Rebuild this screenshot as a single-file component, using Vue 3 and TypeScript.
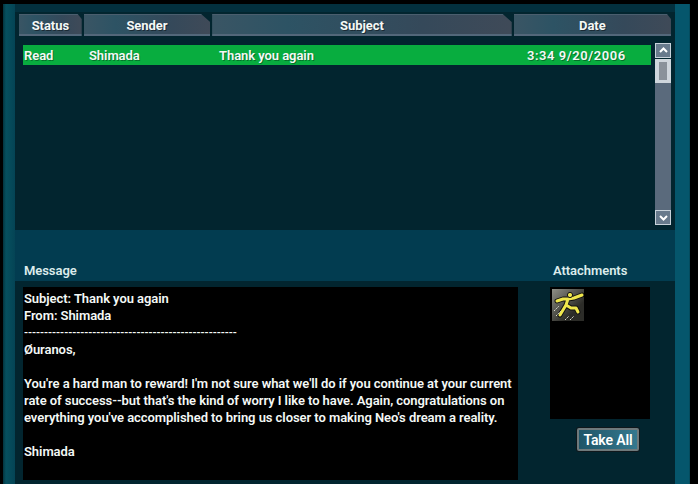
<script setup lang="ts">
const columns = [
  { label: 'Status', width: 63, cut: false },
  { label: 'Sender', width: 127, cut: true },
  { label: 'Subject', width: 301, cut: true },
  { label: 'Date', width: 158, cut: false },
]

const messageLines = [
  'Subject: Thank you again',
  'From: Shimada',
  '-----------------------------------------------------',
  'Øuranos,',
  '',
  "You're a hard man to reward! I'm not sure what we'll do if you continue at your current",
  "rate of success--but that's the kind of worry I like to have. Again, congratulations on",
  "everything you've accomplished to bring us closer to making Neo's dream a reality.",
  '',
  'Shimada',
]

const figure = 'M16 10 L11 10 L5 12 M16 10 L22 9 L30 6 M16 10 L14 16 L19 19 L24 19 L26 23 M14 16 L11 21 L8 26'
</script>

<template>
  <div class="screen">
    <div class="frame">
      <section class="inbox">
        <div class="tabs">
          <div
            v-for="col in columns"
            :key="col.label"
            class="tab"
            :class="{ cut: col.cut }"
            :style="{ width: col.width + 'px' }"
          >
            {{ col.label }}
          </div>
        </div>
        <div class="list-wrap">
          <div class="list">
            <div class="row">
              <span class="c-status">Read</span>
              <span class="c-sender">Shimada</span>
              <span class="c-subject">Thank you again</span>
              <span class="c-date">3:34 9/20/2006</span>
            </div>
          </div>
          <div class="scrollbar">
            <div class="arrow">
              <svg width="11" height="11" viewBox="0 0 11 11"><path d="M2 7 L5.5 3.5 L9 7" fill="none" stroke="#fff" stroke-width="2" /></svg>
            </div>
            <div class="thumb"><i></i></div>
            <div class="track"></div>
            <div class="arrow">
              <svg width="11" height="11" viewBox="0 0 11 11"><path d="M2 4 L5.5 7.5 L9 4" fill="none" stroke="#fff" stroke-width="2" /></svg>
            </div>
          </div>
        </div>
      </section>

      <div class="labels">
        <h3 class="label-message">Message</h3>
        <h3>Attachments</h3>
      </div>

      <section class="detail">
        <div class="message">
          <div v-for="(line, i) in messageLines" :key="i" class="line" :class="{ rule: line.startsWith('---') }">{{ line }}</div>
        </div>
        <div class="attach-col">
          <div class="attach-box">
            <div class="item">
              <svg width="32" height="32" viewBox="0 0 32 32">
                <path :d="figure" fill="none" stroke="#111" stroke-width="5" stroke-linecap="round" stroke-linejoin="round" />
                <path :d="figure" fill="none" stroke="#efe64c" stroke-width="3" stroke-linecap="round" stroke-linejoin="round" />
                <circle cx="18" cy="6" r="2.6" fill="#efe64c" stroke="#111" />
                <path d="M2 22 L7 17 M4 27 L9 22 M13 31 L17 27 M18 31 L22 27" stroke="#dcdcd2" stroke-width="1" stroke-dasharray="2 1" fill="none" />
              </svg>
            </div>
          </div>
          <button class="take-all" type="button">Take All</button>
        </div>
      </section>
    </div>
  </div>
</template>

<style>
html,
body {
  margin: 0;
  background: #000;
}
</style>

<style scoped>
.screen {
  width: 698px;
  height: 484px;
  box-sizing: border-box;
  padding: 4px 8px 0 3px;
  background: #000;
  overflow: hidden;
  font-family: 'Roboto', 'Liberation Sans', sans-serif;
  font-size: 13px;
  font-weight: 600;
  letter-spacing: -0.06px;
  color: #f4f8f6;
}

.frame {
  height: 480px;
  box-sizing: border-box;
  padding: 0 15px 0 12px;
  background: linear-gradient(90deg, #03343f 0, #06505f 3px, #044455 12px, #023c50 12px, #023c50 672px, #05566c 672px, #05566c 686px, #03404f 687px);
}

.inbox {
  height: 226px;
  box-sizing: border-box;
  border-top: 8px solid #03303e;
  background: #02252f;
}

.tabs {
  display: flex;
  height: 24px;
  padding: 2px 4px 0 4px;
  gap: 2px;
}

.tab {
  box-sizing: border-box;
  height: 22px;
  line-height: 21px;
  text-align: center;
  font-weight: 700;
  text-shadow: 1px 1px 0 #1a2a34;
  background: linear-gradient(90deg, #3a5564, #2d5364 25%, #35495a 70%, #3f4a58);
  border-bottom: 2px solid #53677a;
  border-top: 1px solid #4a5e6e;
  clip-path: polygon(0 0, calc(100% - 4px) 0, 100% 5px, 100% 100%, 0 100%);
}

.tab.cut {
  clip-path: polygon(0 0, calc(100% - 9px) 0, 100% 8px, 100% 100%, 0 100%);
}

.list-wrap {
  display: flex;
  margin-top: 7px;
  padding: 0 4px 0 8px;
}

.list {
  width: 628px;
}

.row {
  display: flex;
  height: 20px;
  line-height: 21px;
  background: #08ad3f;
  text-shadow: 1px 1px 0 rgba(0, 0, 0, 0.35);
}

.c-status {
  width: 66px;
  padding-left: 1px;
  box-sizing: border-box;
}

.c-sender {
  width: 130px;
}

.c-subject {
  width: 308px;
}

.c-date {
  letter-spacing: 0.55px;
}

.scrollbar {
  display: flex;
  flex-direction: column;
  width: 16px;
  height: 182px;
  margin: -2px 0 0 4px;
}

.arrow {
  display: flex;
  align-items: center;
  justify-content: center;
  height: 15px;
  box-sizing: border-box;
  background: #687a8c;
  border: 1px solid #c8d2da;
}

.thumb {
  height: 24px;
  margin-top: 1px;
  box-sizing: border-box;
  padding: 3px 4px;
  background: #cfd6dc;
}

.thumb i {
  display: block;
  height: 100%;
  background: #8a929a;
}

.track {
  flex: 1;
  background: #5a6a7c;
}

.labels {
  display: flex;
  height: 51px;
  box-sizing: border-box;
  padding: 33px 0 0 9px;
}

h3 {
  margin: 0;
  line-height: 16px;
  font-size: 13px;
  font-weight: 600;
  color: #dcecec;
}

.label-message {
  width: 529px;
}

.detail {
  display: flex;
  height: 203px;
  box-sizing: border-box;
  padding: 6px 25px 0 8px;
  background: #02252f;
}

.message {
  width: 495px;
  height: 193px;
  box-sizing: border-box;
  padding: 3px 1px;
  background: #000;
}

.line {
  height: 17px;
  line-height: 17px;
  white-space: pre;
}

.rule {
  font-size: 11px;
  letter-spacing: -0.02px;
}

.attach-col {
  width: 100px;
  margin-left: 32px;
}

.attach-box {
  height: 132px;
  box-sizing: border-box;
  padding: 2px;
  background: #000;
}

.item {
  width: 32px;
  height: 32px;
  background: linear-gradient(135deg, #8f8f86, #2c2c28 70%);
}

.item svg {
  display: block;
}

.take-all {
  display: block;
  margin: 9px 0 0 27px;
  width: 62px;
  height: 23px;
  padding: 0;
  font: inherit;
  font-size: 14px;
  letter-spacing: -0.1px;
  color: #fff;
  background: linear-gradient(90deg, #1f5568, #35788e);
  border: 2px solid #6f7a7c;
  box-shadow: 0 0 0 1px #10181c;
  border-radius: 2px;
}
</style>
